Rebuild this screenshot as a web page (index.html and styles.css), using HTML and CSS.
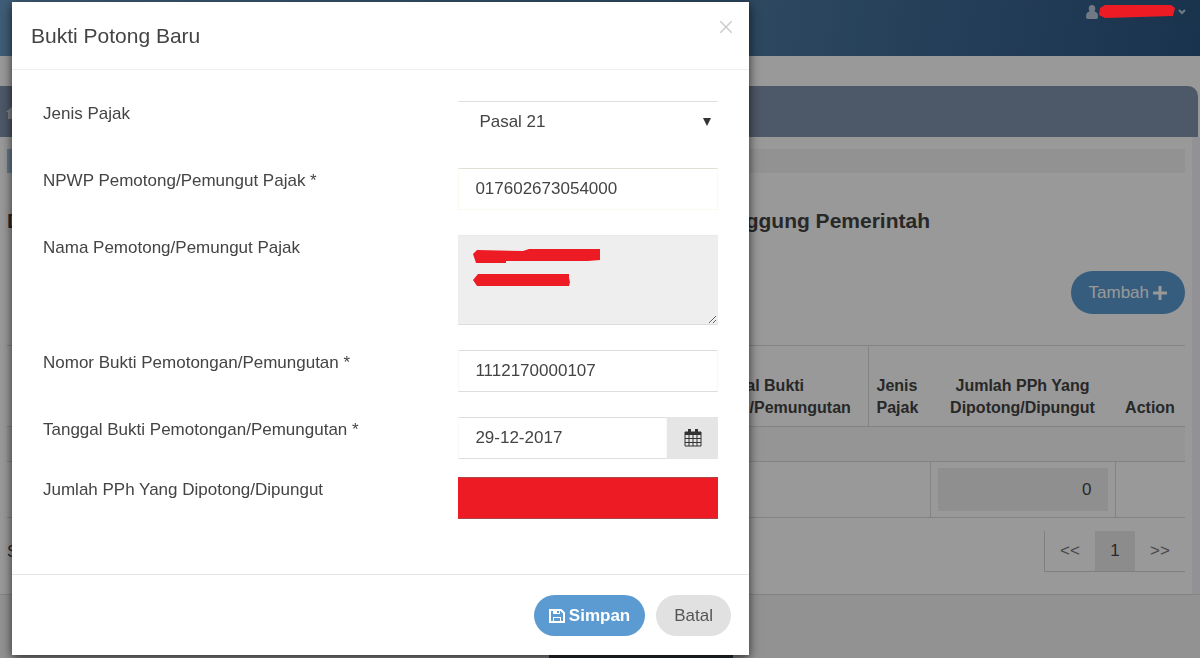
FILE: index.html
```
<!DOCTYPE html>
<html lang="id">
<head>
    <meta charset="UTF-8">
    <meta name="viewport" content="width=device-width, initial-scale=1.0">
    <title>Bukti Potong Baru</title>
    <link rel="stylesheet" href="styles.css">
</head>
<body>

    <header class="topbar">
        <button class="user-menu" type="button" aria-label="Menu pengguna">
            <svg width="12" height="14" viewBox="0 0 12 14"><path d="M6 0c2 0 3.300 1.500 3.300 3.500 0 1-.3 2-.9 2.700C10.800 6.800 12 8.500 12 12c0 1.200-.8 2-2 2H2c-1.200 0-2-.8-2-2 0-3.500 1.200-5.200 3.600-5.800-.6-.7-.9-1.700-.9-2.700C2.700 1.500 4 0 6 0z" fill="currentColor"/></svg>
            <svg width="8" height="6" viewBox="0 0 8 6"><path d="M1 1l3 3 3-3" fill="none" stroke="currentColor" stroke-width="2"/></svg>
        </button>
    </header>

    <nav class="menu">
        <a href="#home" aria-label="Home">
            <svg width="16" height="14" viewBox="0 0 16 14"><path d="M8 0l8 7h-2v7h-4V9H6v5H2V7H0z" fill="currentColor"/></svg>
        </a>
    </nav>

    <main class="content">
        <div class="progress"><div class="progress-bar"></div></div>

        <h2 class="page-title"><span>Daftar Pemotongan/Pemungutan PPh oleh Pihak Lain</span><span>dan PPh yang Ditanggung Pemerintah</span></h2>

        <div class="toolbar">
            <button class="btn btn-primary" type="button">Tambah
                <svg width="14" height="14" viewBox="0 0 14 14"><path d="M5.500 0h3v5.500H14v3H8.500V14h-3V8.500H0v-3h5.500z" fill="currentColor"/></svg>
            </button>
        </div>

        <table class="list">
            <colgroup>
                <col>
                <col class="col-date">
                <col class="col-type">
                <col class="col-amount">
                <col class="col-action">
            </colgroup>
            <thead>
                <tr>
                    <th></th>
                    <th class="center">Tanggal Bukti<br>Pemotongan/Pemungutan</th>
                    <th class="line">Jenis Pajak</th>
                    <th class="center">Jumlah PPh Yang Dipotong/Dipungut</th>
                    <th class="center">Action</th>
                </tr>
            </thead>
            <tbody>
                <tr class="filter"><td colspan="5"></td></tr>
                <tr class="total">
                    <td colspan="3"></td>
                    <td class="line"><input type="text" value="0" aria-label="Total" readonly></td>
                    <td class="line"></td>
                </tr>
            </tbody>
        </table>

        <div class="list-footer">
            <span>Showing</span>
            <div class="pages">
                <a href="#prev">&lt;&lt;</a>
                <a href="#1" class="active">1</a>
                <a href="#next">&gt;&gt;</a>
            </div>
        </div>
    </main>

    <footer class="bottom"><div class="bottom-bar"></div></footer>

    <div class="backdrop"></div>
    <svg class="user-mark" width="80" height="14" viewBox="0 0 80 14"><path d="M3 4L8 1h66l4 3-2 8-68 2-6-3z" fill="#ed1c24"/></svg>

    <form class="modal" role="dialog" aria-labelledby="modalTitle">
        <div class="modal-header">
            <h1 id="modalTitle">Bukti Potong Baru</h1>
            <button class="close" type="button" aria-label="Close">
                <svg width="12" height="12" viewBox="0 0 12 12"><path d="M0 0l12 12M12 0L0 12" stroke="currentColor" stroke-width="1.500"/></svg>
            </button>
        </div>

        <div class="modal-body">
            <label for="jenis">Jenis Pajak</label>
            <div class="select-wrap">
                <select id="jenis">
                    <option>Pasal 21</option>
                </select>
                <svg width="8" height="8" viewBox="0 0 8 8"><path d="M0 0h8L4 8z" fill="#333"/></svg>
            </div>

            <label for="npwp">NPWP Pemotong/Pemungut Pajak *</label>
            <input class="control valid" id="npwp" type="text" value="017602673054000">

            <label for="nama">Nama Pemotong/Pemungut Pajak</label>
            <div class="area-wrap">
                <textarea class="control" id="nama" readonly></textarea>
                <svg class="area-mark" width="128" height="40" viewBox="0 0 128 40">
                    <path d="M0 6l4-4 46 1 6-2h71v11l-12 1H33v2H3l-1-3z" fill="#ed1c24"/>
                    <path d="M0 32l5-6h91v4l1 4-1 4H4z" fill="#ed1c24"/>
                </svg>
            </div>

            <label for="nomor">Nomor Bukti Pemotongan/Pemungutan *</label>
            <input class="control" id="nomor" type="text" value="1112170000107">

            <label for="tanggal">Tanggal Bukti Pemotongan/Pemungutan *</label>
            <div class="date-group">
                <input class="control" id="tanggal" type="text" value="29-12-2017">
                <button type="button" aria-label="Pilih tanggal">
                    <svg width="18" height="18" viewBox="0 0 18 18">
                        <path d="M1 3h16v14H1z" fill="none" stroke="#333" stroke-width="1"/>
                        <path d="M1 3h16v3H1z" fill="#333"/>
                        <path d="M4 0h3v5H4zM11 0h3v5h-3z" fill="#333"/>
                        <path d="M1 9.500h16M1 13.500h16M5 6v11M9 6v11M13 6v11" stroke="#333" stroke-width="1"/>
                    </svg>
                </button>
            </div>

            <label class="tight" for="jumlah">Jumlah PPh Yang Dipotong/Dipungut</label>
            <input class="control filled tight" id="jumlah" type="text">
        </div>

        <div class="modal-footer">
            <button class="btn btn-primary save" type="button">
                <svg width="16" height="14" viewBox="0 0 16 14">
                    <path d="M1 1h11l3 3v9H1z" fill="none" stroke="currentColor" stroke-width="2"/>
                    <path d="M4 1h7v4H4zM4 8h8v5H4z" fill="currentColor"/>
                    <path d="M8 2h2v2H8zM5 9h6v3H5z" fill="#5b9bd1"/>
                </svg>
                Simpan
            </button>
            <button class="btn btn-default" type="button">Batal</button>
        </div>
    </form>

</body>
</html>
```

FILE: styles.css
```
* {
    margin: 0;
    padding: 0;
    box-sizing: border-box;
}

body {
    font-family: "Liberation Sans", Arial, sans-serif;
    font-size: 17px;
    line-height: 22px;
    color: #444;
    background-color: #fff;
}

button, input, select, textarea {
    font: inherit;
    color: inherit;
    border: none;
    border-radius: 0;
    outline: none;
}

/* Page */
.topbar {
    height: 56px;
    padding: 4px 14px;
    display: flex;
    justify-content: flex-end;
    align-items: flex-start;
    background: linear-gradient(100deg, #6a9cc8 0%, #4b789f 63%, #3a6390 84%, #2b5681 100%);
}

.user-menu {
    width: 100px;
    height: 16px;
    display: flex;
    justify-content: space-between;
    align-items: center;
    background: none;
    color: #bccbdc;
}

.menu {
    height: 51px;
    margin: 30px 2px 0 0;
    padding-left: 6px;
    display: flex;
    align-items: center;
    background-color: #8093ad;
    border-top-right-radius: 10px;
}

.menu a {
    color: #d8dfe8;
    display: flex;
}

.content {
    padding: 12px 7px 22px;
    border-right: 8px solid #f4f4fb;
}

.progress {
    height: 24px;
    background-color: #f3f3f3;
}

.progress-bar {
    width: 14%;
    height: 100%;
    background-color: #a9c9e6;
}

.page-title {
    max-width: 923px;
    margin-top: 36px;
    display: flex;
    justify-content: space-between;
    font-size: 21px;
    line-height: 24px;
    white-space: nowrap;
}

.toolbar {
    margin-top: 38px;
    display: flex;
    justify-content: flex-end;
}

.btn {
    height: 41px;
    padding: 0 18px;
    display: flex;
    align-items: center;
    gap: 4px;
    border-radius: 21px;
    cursor: pointer;
}

.toolbar .btn {
    height: 43px;
    border-radius: 22px;
}

.btn-primary {
    background-color: #5b9bd1;
    color: #fff;
}

.btn-default {
    background-color: #e1e1e1;
    color: #555;
}

.list {
    width: 100%;
    margin-top: 31px;
    table-layout: fixed;
    border-collapse: collapse;
}

.col-date {
    width: 232px;
}

.col-type {
    width: 62px;
}

.col-amount {
    width: 185px;
}

.col-action {
    width: 70px;
}

.list tr {
    border-top: 1px solid #dadada;
    border-bottom: 1px solid #dadada;
}

.list th {
    height: 81px;
    padding: 0 8px 7px;
    vertical-align: bottom;
    text-align: left;
    font-size: 16px;
}

.list th.center {
    padding: 0 0 7px;
    text-align: center;
}

.list .line {
    border-left: 1px solid #dadada;
}

.filter td {
    height: 35px;
    background-color: #f8f8f8;
}

.total td {
    height: 56px;
    padding: 0 7px;
}

.total input {
    width: 100%;
    height: 43px;
    padding: 0 16px;
    display: block;
    text-align: right;
    background-color: #eee;
}

.list-footer {
    margin-top: 13px;
    display: flex;
    justify-content: space-between;
    align-items: center;
}

.pages {
    display: flex;
    border-left: 1px solid #d4d4d4;
    border-bottom: 1px solid #d4d4d4;
}

.pages a {
    width: 50px;
    line-height: 40px;
    text-align: center;
    text-decoration: none;
    color: #777;
}

.pages .active {
    width: 40px;
    color: #444;
    background-color: #eaeaea;
}

.bottom {
    padding-top: 60px;
    border-top: 1px solid #dadada;
    background-color: #f3f3f3;
}

.bottom-bar {
    width: 184px;
    height: 3px;
    margin: 0 auto;
    background-color: #444d58;
    transform: translateX(41px);
}

/* Modal */
.backdrop {
    position: fixed;
    inset: 0;
    background-color: rgba(0, 0, 0, 0.4);
}

.user-mark {
    position: absolute;
    top: 4px;
    right: 23px;
}

.modal {
    position: absolute;
    top: 2px;
    left: 12px;
    width: 100%;
    max-width: 737px;
    background-color: #fff;
    box-shadow: 0 3px 10px rgba(0, 0, 0, 0.7);
}

.modal-header {
    height: 68px;
    padding: 0 17px 0 19px;
    display: flex;
    justify-content: space-between;
    align-items: center;
    border-bottom: 1px solid #eee;
}

.modal-header h1 {
    font-size: 21px;
    font-weight: normal;
}

.close {
    margin-bottom: 18px;
    display: flex;
    background: none;
    color: #ccc;
    cursor: pointer;
}

.modal-body {
    padding: 31px 31px 55px;
    display: grid;
    grid-template-columns: 8fr 5fr;
    row-gap: 25px;
}

.modal-body label {
    line-height: 26px;
}

.modal-body .tight {
    margin-top: -7px;
}

.control, select {
    width: 100%;
    height: 42px;
    padding: 0 16px;
    display: block;
    border: 1px solid #ddd;
    border-left-color: #f8f8f8;
    border-right-color: #f8f8f8;
    background-color: #fff;
}

.valid {
    border-color: #e2e0d4 #fbf8ee #fbf8ee;
}

.select-wrap, .area-wrap {
    position: relative;
}

select {
    padding: 0 20px;
    appearance: none;
    border-color: #ddd #fff #fff;
}

.select-wrap svg {
    position: absolute;
    top: 17px;
    right: 7px;
    pointer-events: none;
}

textarea.control {
    height: 90px;
    padding: 8px 16px;
    border-color: #e8e8e8 #eee #ddd;
    background-color: #eee;
    resize: vertical;
}

.area-mark {
    position: absolute;
    top: 13px;
    left: 15px;
    pointer-events: none;
}

.date-group {
    display: flex;
}

.date-group button {
    width: 51px;
    flex-shrink: 0;
    display: flex;
    justify-content: center;
    align-items: center;
    background-color: #e5e5e5;
}

.control.filled {
    background-color: #ed1c24;
    border-color: #a8474b #ed1c24;
}

.modal-footer {
    padding: 20px 18px 19px;
    display: flex;
    justify-content: flex-end;
    gap: 11px;
    border-top: 1px solid #e5e5e5;
}

.save {
    padding: 0 15px;
    font-weight: bold;
}
```
